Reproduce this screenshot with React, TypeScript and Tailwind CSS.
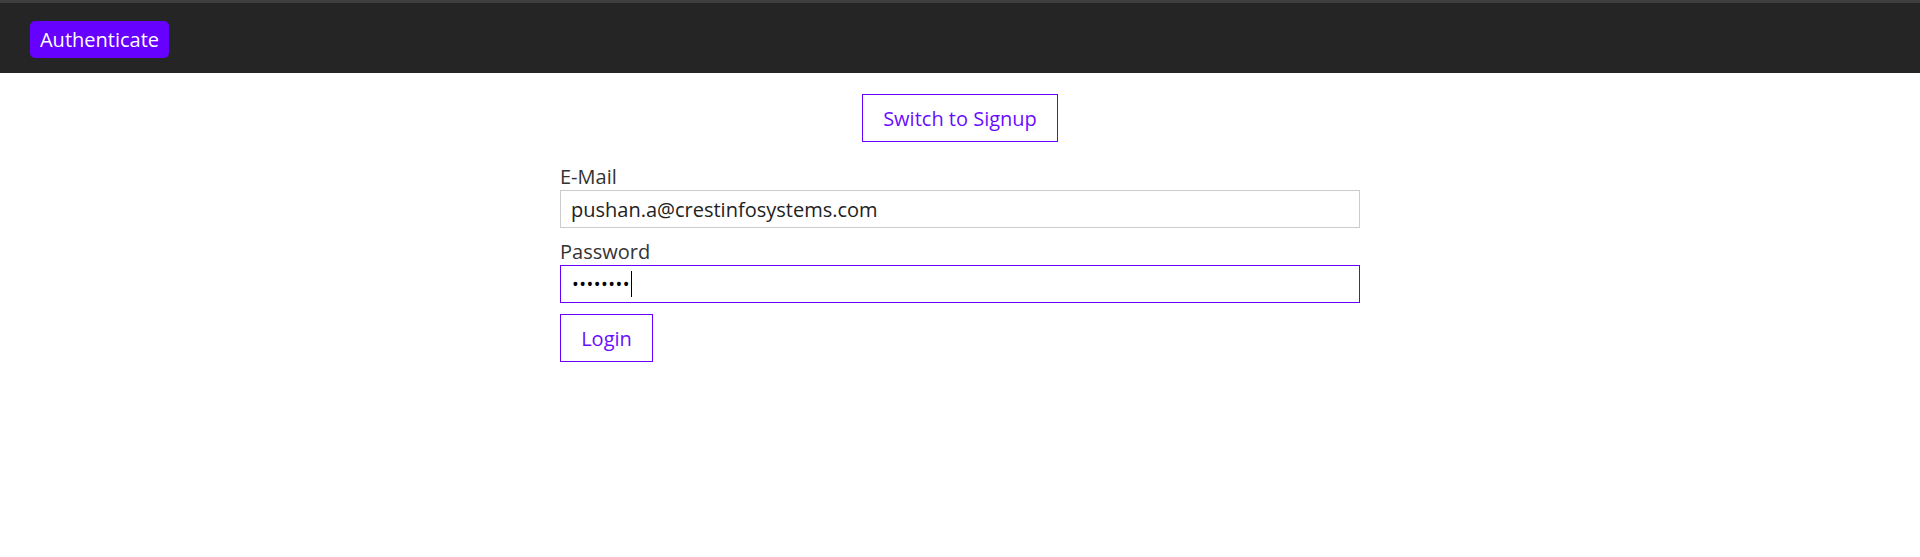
import React from "react";

const font = { fontFamily: '"Open Sans", "Noto Sans", sans-serif' };

const App = () => {
  return (
    <div className="min-h-screen bg-white" style={font}>
      {/* Header */}
      <header className="h-[73px] bg-[#252525] border-t-[3px] border-[#3f3f3f] flex items-start px-[30px] pt-[18px]">
        <button className="h-[37px] w-[139px] rounded-[5px] bg-[#6600ff] text-white text-[20px] leading-none">
          Authenticate
        </button>
      </header>

      {/* Main */}
      <main className="flex flex-col items-center pt-[21px]">
        <button className="w-[196px] h-[48px] border border-[#6600ff] text-[#6a0dff] text-[20px] leading-[25px] bg-white">
          Switch to Signup
        </button>

        <form className="w-[800px] mt-[22px] flex flex-col" onSubmit={(e) => e.preventDefault()}>
          <label className="text-[20px] leading-[25px] mb-[1px] text-[#333]">E-Mail</label>
          <input
            type="email"
            defaultValue="pushan.a@crestinfosystems.com"
            className="h-[38px] border border-[#cccccc] px-[10px] text-[20px] text-[#222] outline-none"
          />

          <label className="text-[20px] leading-[25px] mb-[1px] mt-[11px] text-[#333]">Password</label>
          <div className="h-[38px] border border-[#6600ff] pl-[11px] flex items-center">
            <span className="text-[18px] leading-none text-black tracking-[0.5px]">••••••••</span>
            <span className="w-px h-[26px] bg-black ml-[1px]" />
          </div>

          <div className="mt-[11px] flex">
            <button className="w-[93px] h-[48px] border border-[#6600ff] text-[#6a0dff] text-[20px] leading-[25px] bg-white">
              Login
            </button>
          </div>
        </form>
      </main>
    </div>
  );
};

export default App;
